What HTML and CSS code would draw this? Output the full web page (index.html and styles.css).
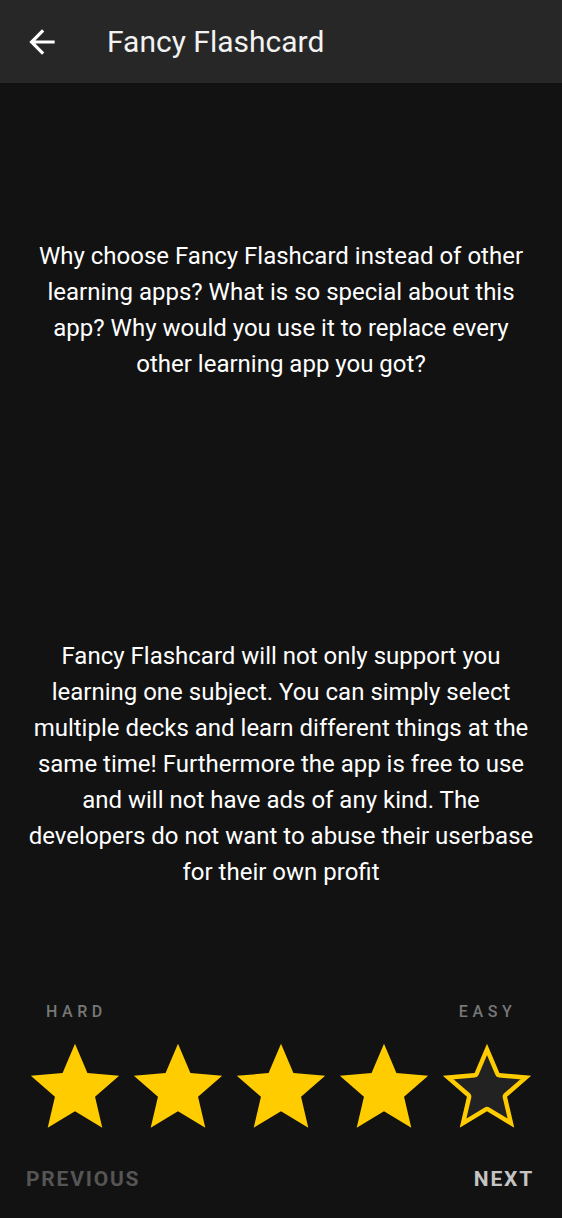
FILE: index.html
```html
<!DOCTYPE html>
<html lang="en">
<head>
<meta charset="utf-8">
<title>Fancy Flashcard</title>
<link rel="stylesheet" href="styles.css">
</head>
<body>
<header class="appbar">
  <button class="back" aria-label="Back">
    <svg viewBox="0 0 24 24" width="38" height="38"><path fill="currentColor" d="M20 11H7.83l5.59-5.59L12 4l-8 8 8 8 1.41-1.41L7.83 13H20v-2z"/></svg>
  </button>
  <h1 class="title">Fancy Flashcard</h1>
</header>
<main class="card">
  <section class="side">
    <p>Why choose Fancy Flashcard instead of other learning apps? What is so special about this app? Why would you use it to replace every other learning app you got?</p>
  </section>
  <section class="side">
    <p>Fancy Flashcard will not only support you learning one subject. You can simply select multiple decks and learn different things at the same time! Furthermore the app is free to use and will not have ads of any kind. The developers do not want to abuse their userbase for their own profit</p>
  </section>
</main>
<section class="rating">
  <div class="labels">
    <span class="label first">HARD</span>
    <span class="label last">EASY</span>
  </div>
  <div class="stars">
    <svg class="star" viewBox="0 0 24 24"><path class="full" d="M12 17.27L18.18 21l-1.64-7.03L22 9.24l-7.19-.61L12 2 9.19 8.63 2 9.24l5.46 4.73L5.82 21z"/></svg>
    <svg class="star" viewBox="0 0 24 24"><path class="full" d="M12 17.27L18.18 21l-1.64-7.03L22 9.24l-7.19-.61L12 2 9.19 8.63 2 9.24l5.46 4.73L5.82 21z"/></svg>
    <svg class="star" viewBox="0 0 24 24"><path class="full" d="M12 17.27L18.18 21l-1.64-7.03L22 9.24l-7.19-.61L12 2 9.19 8.63 2 9.24l5.46 4.73L5.82 21z"/></svg>
    <svg class="star" viewBox="0 0 24 24"><path class="full" d="M12 17.27L18.18 21l-1.64-7.03L22 9.24l-7.19-.61L12 2 9.19 8.63 2 9.24l5.46 4.73L5.82 21z"/></svg>
    <svg class="star" viewBox="0 0 24 24">
      <defs><clipPath id="starclip"><path d="M12 17.27L18.18 21l-1.64-7.03L22 9.24l-7.19-.61L12 2 9.19 8.63 2 9.24l5.46 4.73L5.82 21z"/></clipPath></defs>
      <path class="empty" clip-path="url(#starclip)" d="M12 17.27L18.18 21l-1.64-7.03L22 9.24l-7.19-.61L12 2 9.19 8.63 2 9.24l5.46 4.73L5.82 21z"/>
    </svg>
  </div>
</section>
<nav class="actions">
  <button class="btn prev">PREVIOUS</button>
  <button class="btn next">NEXT</button>
</nav>
</body>
</html>
```

FILE: styles.css
```css
* { box-sizing: border-box; }
html, body { margin: 0; padding: 0; }
body {
  height: 1218px;
  background: #121212;
  color: #fff;
  font-family: Roboto, "Noto Sans", sans-serif;
  display: flex;
  flex-direction: column;
}
.appbar {
  height: 83px;
  flex: none;
  background: #272727;
  display: flex;
  align-items: center;
  padding-left: 23px;
}
.back {
  background: none;
  border: 0;
  padding: 0;
  width: 38px;
  height: 38px;
  color: #fff;
  display: flex;
}
.title {
  margin: 0 0 0 46px;
  font-size: 30px;
  font-weight: 400;
  color: #f2f2f2;
  line-height: 1;
}
.card {
  flex: 1;
  display: flex;
  flex-direction: column;
}
.side {
  flex: 1;
  display: flex;
  align-items: center;
  justify-content: center;
  padding: 0 24px;
}
.side p {
  margin: 0;
  text-align: center;
  font-size: 24px;
  line-height: 36px;
  color: #fff;
}
.rating {
  flex: none;
  padding: 11px 24px 0;
}
.labels {
  display: grid;
  grid-template-columns: repeat(5, minmax(0, 1fr));
  height: 20px;
}
.label {
  font-size: 16px;
  line-height: 20px;
  font-weight: 500;
  letter-spacing: 4.6px;
  color: #777;
  text-align: center;
  padding-left: 2px;
}
.label.first { grid-column: 1; }
.label.last { grid-column: 5; }
.stars {
  margin-top: 13px;
  display: grid;
  grid-template-columns: repeat(5, minmax(0, 1fr));
  height: 103px;
}
.star {
  width: 106px;
  height: 106px;
  justify-self: center;
  display: block;
}
.star .full { fill: #ffcc00; }
.star .empty { fill: #222; stroke: #ffcc00; stroke-width: 2; stroke-linejoin: round; }
.actions {
  flex: none;
  display: flex;
  justify-content: space-between;
  align-items: center;
  height: 48px;
  margin: 17px 0 15px;
  padding: 0 28px 0 26px;
}
.btn {
  background: none;
  border: 0;
  padding: 0;
  font-family: Roboto, "Noto Sans", sans-serif;
  font-size: 21px;
  font-weight: 700;
  letter-spacing: 1.8px;
  line-height: 48px;
}
.btn.prev { color: #555; }
.btn.next { color: #c4c4c4; }
```
